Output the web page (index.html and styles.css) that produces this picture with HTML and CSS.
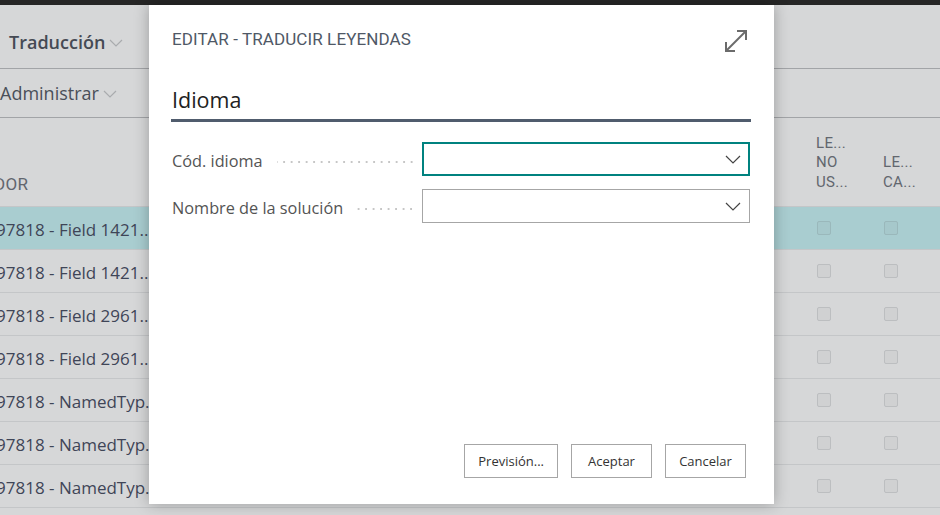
FILE: index.html
```html
<!DOCTYPE html>
<html lang="es">
<head>
<meta charset="utf-8">
<title>Editar - Traducir leyendas</title>
<link rel="stylesheet" href="styles.css">
</head>
<body>
<div class="topbar"></div>
<div class="page">
  <div class="action-row first">
    <span class="action strong">Traducción</span>
    <svg class="chev" width="14" height="8" viewBox="0 0 14 8"><path d="M1 1 L7 7 L13 1" fill="none" stroke="#a9abae" stroke-width="1.2"/></svg>
  </div>
  <div class="action-row second">
    <span class="action">Administrar</span>
    <svg class="chev" width="14" height="8" viewBox="0 0 14 8"><path d="M1 1 L7 7 L13 1" fill="none" stroke="#a9abae" stroke-width="1.2"/></svg>
  </div>
  <div class="table">
    <div class="thead">
      <div class="th main"><span class="clip">DOR</span></div>
      <div class="th mid"></div>
      <div class="th narrow">LE...<br>NO<br>US...</div>
      <div class="th narrow">LE...<br>CA...</div>
    </div>
    <div class="tr selected"><div class="td main">97818 - Field 1421..</div><div class="td mid"></div><div class="td narrow"><span class="cb"></span></div><div class="td narrow"><span class="cb"></span></div></div>
    <div class="tr"><div class="td main">97818 - Field 1421..</div><div class="td mid"></div><div class="td narrow"><span class="cb"></span></div><div class="td narrow"><span class="cb"></span></div></div>
    <div class="tr"><div class="td main">97818 - Field 2961..</div><div class="td mid"></div><div class="td narrow"><span class="cb"></span></div><div class="td narrow"><span class="cb"></span></div></div>
    <div class="tr"><div class="td main">97818 - Field 2961..</div><div class="td mid"></div><div class="td narrow"><span class="cb"></span></div><div class="td narrow"><span class="cb"></span></div></div>
    <div class="tr"><div class="td main">97818 - NamedTyp.</div><div class="td mid"></div><div class="td narrow"><span class="cb"></span></div><div class="td narrow"><span class="cb"></span></div></div>
    <div class="tr"><div class="td main">97818 - NamedTyp.</div><div class="td mid"></div><div class="td narrow"><span class="cb"></span></div><div class="td narrow"><span class="cb"></span></div></div>
    <div class="tr"><div class="td main">97818 - NamedTyp.</div><div class="td mid"></div><div class="td narrow"><span class="cb"></span></div><div class="td narrow"><span class="cb"></span></div></div>
  </div>
</div>

<div class="dialog">
  <div class="dlg-head">
    <div class="dlg-title">EDITAR - TRADUCIR LEYENDAS</div>
    <svg class="expand" width="28" height="28" viewBox="0 0 28 28">
      <path d="M4 24 L24 4" stroke="#6b6b6b" stroke-width="2" fill="none"/>
      <path d="M15 4 H24 V13" stroke="#6b6b6b" stroke-width="2" fill="none"/>
      <path d="M4 15 V24 H13" stroke="#6b6b6b" stroke-width="2" fill="none"/>
    </svg>
  </div>
  <div class="section">
    <div class="section-title">Idioma</div>
    <div class="fields">
      <div class="field">
        <label class="label">Cód. idioma</label>
        <div class="select focused">
          <svg width="16" height="9" viewBox="0 0 16 9"><path d="M1 1 L8 8 L15 1" fill="none" stroke="#444" stroke-width="1.2"/></svg>
        </div>
      </div>
      <div class="field">
        <label class="label">Nombre de la solución</label>
        <div class="select">
          <svg width="16" height="9" viewBox="0 0 16 9"><path d="M1 1 L8 8 L15 1" fill="none" stroke="#444" stroke-width="1.2"/></svg>
        </div>
      </div>
    </div>
  </div>
  <div class="dlg-foot">
    <button class="btn">Previsión...</button>
    <button class="btn">Aceptar</button>
    <button class="btn">Cancelar</button>
  </div>
</div>
</body>
</html>
```

FILE: styles.css
```css
* { box-sizing: border-box; }
html, body { margin: 0; padding: 0; }
body {
  width: 940px;
  height: 515px;
  overflow: hidden;
  background: #d6d7d8;
  font-family: "Open Sans", "Noto Sans", sans-serif;
  position: relative;
}
.topbar { height: 5px; background: #262626; }
.page { background: #d6d7d8; }

.action-row {
  display: flex;
  align-items: center;
  gap: 4px;
  border-bottom: 1px solid #a2a4a7;
}
.action-row.first { height: 64px; padding: 10px 0 0 9px; }
.action-row.second { height: 49px; padding: 0; }
.action { font-size: 18px; color: #4a4f59; }
.action.strong { font-weight: 600; color: #454a54; }
.chev { margin-top: 2px; }

.table { display: flex; flex-direction: column; }
.thead, .tr { display: grid; grid-template-columns: 150px 666px 67px 57px; }
.thead { height: 89px; border-bottom: 1px solid #c4c6c8; }
.th {
  display: flex;
  align-items: flex-end;
  padding-bottom: 14px;
  font-family: "Roboto", "Liberation Sans", sans-serif;
  font-size: 15px;
  font-weight: 400;
  line-height: 19.5px;
  color: #62666e;
  letter-spacing: 0.3px;
}
.th.main { padding-bottom: 12px; }
.clip { margin-left: -6px; font-size: 17px; }
.tr { height: 43px; border-bottom: 1px solid #c4c6c8; }
.tr.selected { background: #a9cdd0; }
.td { display: flex; align-items: center; }
.td.main {
  font-size: 17px;
  color: #3f4557;
  white-space: nowrap;
  text-indent: -4px;
  padding-top: 2px;
}
.td.narrow { padding-left: 1px; }
.cb {
  width: 14px;
  height: 14px;
  border: 1px solid #bcbec0;
  border-radius: 2px;
  background: #d0d1d2;
}
.tr.selected .cb { background: #a6c8cb; border-color: #9ab8bb; }

.dialog {
  position: absolute;
  left: 149px;
  top: 5px;
  width: 625px;
  height: 499px;
  background: #ffffff;
  box-shadow: 0 0 14px rgba(0,0,0,0.28);
  display: flex;
  flex-direction: column;
  padding: 22px 24px 26px 23px;
}
.dlg-head {
  display: flex;
  justify-content: space-between;
  align-items: flex-start;
  height: 59px;
}
.dlg-title {
  font-family: "Roboto", "Liberation Sans", sans-serif;
  font-size: 17px;
  font-weight: 400;
  line-height: 24px;
  color: #4f5866;
  letter-spacing: 0.1px;
}
.section { flex: 1; }
.section-title {
  font-size: 21.5px;
  color: #212121;
  line-height: 28px;
  padding-bottom: 5px;
  border-bottom: 3px solid #505c6d;
  margin-left: -1px;
  margin-right: -1px;
  padding-left: 1px;
}
.fields { display: flex; flex-direction: column; gap: 13px; margin-top: 20px; }
.field { display: flex; align-items: center; height: 34px; }
.label {
  width: 250px;
  font-size: 16.3px;
  color: #545454;
  display: flex;
  align-items: center;
  gap: 14px;
  padding-right: 7px;
  padding-top: 3px;
  white-space: nowrap;
}
.label::after {
  content: "";
  flex: 1;
  height: 2px;
  margin-top: 2px;
  background-image: radial-gradient(circle, #c6c6c6 0.8px, transparent 1px);
  background-size: 7.5px 2px;
  background-repeat: repeat-x;
  background-position: right;
}
.select {
  flex: 1;
  height: 34px;
  border: 1px solid #a6a6a6;
  display: flex;
  align-items: center;
  justify-content: flex-end;
  padding-right: 8px;
}
.select.focused { border: 2px solid #00827f; padding-right: 7px; }
.dlg-foot { display: flex; justify-content: flex-end; gap: 13px; padding-right: 4px; }
.btn {
  height: 34px;
  min-width: 81px;
  padding: 0 13px;
  background: #ffffff;
  border: 1px solid #a6a6a6;
  font-family: "Open Sans", "Noto Sans", sans-serif;
  font-size: 13px;
  color: #333333;
  border-radius: 0;
}
```
